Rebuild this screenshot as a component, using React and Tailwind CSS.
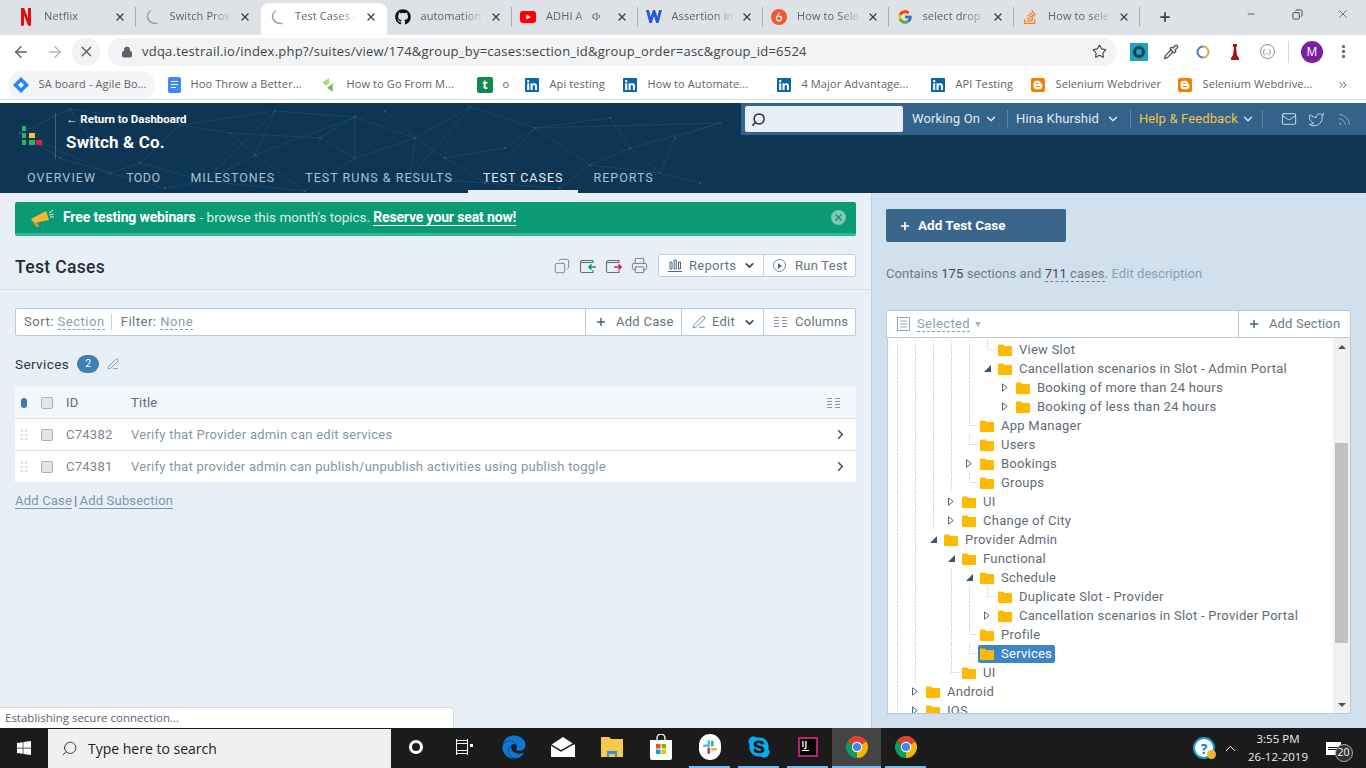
import React from 'react'
import {
  ArrowLeft, ArrowRight, X, Lock, Star, MoreVertical, Plus, Minus, Search, ChevronDown, ChevronRight,
  Mail, Twitter, Rss, Copy, Printer, PenLine, Volume1, ChevronUp, ChevronsRight, Pipette,
} from 'lucide-react'
import { FaGithub, FaWindows, FaEdge, FaSkype, FaStackOverflow, FaLinkedin, FaBlogger } from 'react-icons/fa'
import { FcGoogle } from 'react-icons/fc'

const CHROME_FONT = { fontFamily: '"Open Sans", "Liberation Sans", sans-serif' }

function Spinner() {
  return (
    <svg width="16" height="16" viewBox="0 0 16 16" fill="none" className="shrink-0">
      <path d="M13 14.500C7 15 3 11 3.500 6.500 3.800 4.500 5 3 6.500 2" stroke="#9aa0a6" strokeWidth="1.400" strokeLinecap="round" />
    </svg>
  )
}

function NetflixN() {
  return (
    <svg width="16" height="18" viewBox="0 0 16 18" className="shrink-0">
      <path d="M3 0h3.200l3.800 10V0H13v18l-3-.4L6 7.500V17.400L3 18z" fill="#e50914" />
    </svg>
  )
}

function YoutubeIcon() {
  return (
    <svg width="16" height="12" viewBox="0 0 16 12" className="shrink-0">
      <rect width="16" height="12" rx="3" fill="#f00" />
      <path d="M6.400 3.400v5.200L11 6z" fill="#fff" />
    </svg>
  )
}

function WLogo() {
  return (
    <svg width="16" height="13" viewBox="0 0 16 13" className="shrink-0">
      <path d="M0 0h3l1.600 7L7 0h2l2.400 7L13 0h3l-3.400 13h-2.400L8 6l-2.200 7H3.400z" fill="#2459d8" />
    </svg>
  )
}

function OrangeCircle() {
  return (
    <svg width="16" height="16" viewBox="0 0 16 16" className="shrink-0">
      <circle cx="8" cy="8" r="8" fill="#f1592a" />
      <path d="M8.500 3.500 5.500 8.500a2.600 2.600 0 1 0 5 0A2.500 2.500 0 0 0 7.500 7.500" fill="none" stroke="#fff" strokeWidth="1.300" />
    </svg>
  )
}

const TABS = [
  { title: 'Netflix', icon: <NetflixN />, sep: true },
  { title: 'Switch Prov', icon: <Spinner />, sep: false },
  { title: 'Test Cases -', icon: <Spinner />, active: true, sep: false },
  { title: 'automation', icon: <FaGithub size={16} className="shrink-0 text-[#111]" />, sep: true },
  { title: 'ADHI A', icon: <YoutubeIcon />, audio: true, sep: true },
  { title: 'Assertion in', icon: <WLogo />, sep: true },
  { title: 'How to Sele', icon: <OrangeCircle />, sep: true },
  { title: 'select drop', icon: <FcGoogle size={16} className="shrink-0" />, sep: true },
  { title: 'How to sele', icon: <FaStackOverflow size={16} className="shrink-0 text-[#f48024]" />, sep: true },
]

function TabStrip() {
  return (
    <div className="h-[35px] shrink-0 bg-[#dee1e6] flex items-end pl-[10px] relative" style={CHROME_FONT}>
      {TABS.map((t) => (
        <div
          key={t.title}
          className={`w-[125.500px] h-[32px] shrink-0 flex items-center pl-[8px] pb-[5px] ${t.active ? 'bg-white rounded-t-lg' : ''}`}
        >
          {t.icon}
          <span className="ml-[10px] flex-1 min-w-0 whitespace-nowrap overflow-hidden text-[11px] tracking-[0.01em] text-[#5f6368] [mask-image:linear-gradient(to_right,black_65%,transparent_98%)]">
            {t.title}
          </span>
          {t.audio && <Volume1 size={11} className="shrink-0 text-[#555] mr-[9px]" />}
          <X size={12} strokeWidth={2.600} className="shrink-0 ml-[4px] mr-px text-[#3c4043]" />
          <span className="w-[9px] h-[20px] shrink-0 flex justify-end">
            {t.sep && <span className="w-px h-full bg-[#a9adb2]" />}
          </span>
        </div>
      ))}
      <Plus size={14} strokeWidth={3} className="ml-[18px] mb-[11px] text-[#3c4043]" />
      <div className="ml-auto self-start flex items-center h-[28px] text-[#444]">
        <span className="w-[46px] flex justify-center"><Minus size={10} /></span>
        <span className="w-[46px] flex justify-center"><Copy size={11} className="-scale-x-100" /></span>
        <span className="w-[46px] flex justify-center"><X size={14} strokeWidth={1.200} /></span>
      </div>
    </div>
  )
}

function ExtIcons() {
  return (
    <div className="flex items-center ml-[6px]">
      <span className="w-[32px] flex justify-center">
        <span className="w-[18px] h-[18px] bg-[#1fa3b8] flex items-center justify-center">
          <span className="w-[12px] h-[12px] rounded-full border-[3px] border-[#0d3d55]" />
        </span>
      </span>
      <span className="w-[32px] flex justify-center"><Pipette size={16} className="text-[#555]" /></span>
      <span className="w-[32px] flex justify-center">
        <svg width="16" height="16" viewBox="0 0 16 16" fill="none">
          <path d="M8 2.500A5.500 5.500 0 0 0 8 13.500" stroke="#3f7fd1" strokeWidth="2" />
          <path d="M8 2.500A5.500 5.500 0 0 1 8 13.500" stroke="#e5a82e" strokeWidth="2" />
        </svg>
      </span>
      <span className="w-[32px] flex justify-center">
        <svg width="12" height="18" viewBox="0 0 12 18">
          <path d="M4 1h4v3H7l1 8 2 3v2H2v-2l2-3 1-8H4z" fill="#a51616" />
        </svg>
      </span>
      <span className="w-[32px] flex justify-center">
        <span className="w-[15px] h-[15px] rounded-full border border-[#888] flex items-center justify-center text-[7px] leading-none text-[#555]">(..)</span>
      </span>
      <span className="w-px h-[22px] bg-[#d5d7da] ml-[5px] mr-[12px]" />
      <span className="w-[22px] h-[22px] rounded-full bg-[#7b1fa2] text-white text-[12px] flex items-center justify-center">M</span>
      <MoreVertical size={17} strokeWidth={2.600} className="ml-[12px] text-[#5f6368]" />
    </div>
  )
}

function Toolbar() {
  return (
    <div className="h-[33px] shrink-0 bg-white flex items-center pl-[12px]" style={CHROME_FONT}>
      <ArrowLeft size={18} className="text-[#5f6368] ml-0" />
      <ArrowRight size={18} className="text-[#b5b8bc] ml-[16px]" />
      <span className="w-[28px] h-[28px] rounded-full bg-[#f1f3f4] ml-[8px] flex items-center justify-center">
        <X size={17} className="text-[#5f6368]" />
      </span>
      <div className="ml-[8px] w-[1009px] h-[28px] rounded-full bg-[#f1f3f4] flex items-center pl-[13px] pr-[10px]">
        <Lock size={12} fill="#5f6368" className="text-[#5f6368]" />
        <span className="ml-[9px] text-[13px] tracking-[0.018em] text-[#444]">vdqa.testrail.io/index.php?/suites/view/174&amp;group_by=cases:section_id&amp;group_order=asc&amp;group_id=6524</span>
        <Star size={15} strokeWidth={1.800} className="ml-auto text-[#444]" />
      </div>
      <ExtIcons />
    </div>
  )
}

const LinkedIn = <FaLinkedin size={16} className="text-[#0a66a8] shrink-0" />
const Blogger = <FaBlogger size={16} className="text-[#f57d00] shrink-0" />

const BOOKMARKS = [
  {
    label: 'SA board - Agile Bo...',
    width: 'w-[147px] mr-[8px] bg-[#f4f5f6] rounded-full',
    icon: (
      <svg width="16" height="16" viewBox="0 0 16 16" className="shrink-0">
        <path d="M8 0l8 8-8 8-8-8z" fill="#2684ff" />
        <path d="M8 5l3 3-3 3-3-3z" fill="#fff" />
      </svg>
    ),
  },
  {
    label: 'Hoo Throw a Better...',
    width: 'w-[154px]',
    icon: (
      <span className="w-[13px] h-[16px] rounded-[2px] bg-[#4285f4] shrink-0 flex flex-col justify-center gap-[2px] px-[3px]">
        <span className="h-px bg-white" /><span className="h-px bg-white" /><span className="h-px bg-white w-[5px]" />
      </span>
    ),
  },
  {
    label: 'How to Go From M...',
    width: 'w-[155px]',
    icon: (
      <svg width="15" height="16" viewBox="0 0 17 16" className="shrink-0">
        <path d="M1 5l7-5v6L4 9z" fill="#a3d977" />
        <path d="M16 5l-4 3v8L6 11l4-3z" fill="#6cb74f" />
      </svg>
    ),
  },
  {
    label: 'o',
    width: 'w-[47px]',
    icon: (
      <span className="w-[16px] h-[16px] rounded-[2px] bg-[#0f8a4b] text-white text-[12px] font-bold leading-none shrink-0 flex items-center justify-center">t</span>
    ),
  },
  { label: 'Api testing', width: 'w-[98px]', icon: LinkedIn },
  { label: 'How to Automate...', width: 'w-[154px]', icon: LinkedIn },
  { label: '4 Major Advantage...', width: 'w-[154px]', icon: LinkedIn },
  { label: 'API Testing', width: 'w-[100px]', icon: LinkedIn },
  { label: 'Selenium Webdriver', width: 'w-[147px]', icon: Blogger },
  { label: 'Selenium Webdrive...', width: 'w-[150px]', icon: Blogger },
]

function Bookmarks() {
  return (
    <div className="h-[35px] shrink-0 bg-white pt-[2px] pb-[3px]" style={CHROME_FONT}>
      <div className="h-[30px] border-b border-[#dadce0] flex items-center pl-[8px]">
        {BOOKMARKS.map((b) => (
          <div key={b.label + b.width} className={`${b.width} h-[28px] shrink-0 flex items-center pl-[5px] gap-[9.500px]`}>
            {b.icon}
            <span className="text-[11px] tracking-[0.01em] text-[#5f6368] whitespace-nowrap">{b.label}</span>
          </div>
        ))}
        <ChevronsRight size={12} className="ml-[15px] text-[#5f6368]" />
      </div>
    </div>
  )
}

const NET_PTS = [
  [20, 30], [70, 6], [140, 60], [205, 78], [275, 8], [355, 14], [415, 35], [470, 4], [535, 25], [590, 62], [630, 45],
  [110, 70], [255, 52], [305, 88], [355, 55], [485, 80], [560, 85], [660, 70], [720, 20], [410, 75], [180, 22],
  [60, 55], [230, 30], [320, 35], [385, 8], [445, 55], [505, 45], [610, 15], [675, 35], [700, 80], [90, 35], [165, 85],
]
const NET_LINKS = [
  [0, 1], [1, 20], [20, 2], [2, 3], [3, 4], [4, 5], [5, 6], [6, 7], [7, 8], [8, 9], [9, 10], [11, 2], [3, 12], [12, 13],
  [13, 14], [14, 6], [14, 5], [4, 12], [6, 19], [19, 15], [15, 16], [16, 9], [9, 17], [10, 18], [8, 15], [7, 19], [5, 12],
  [20, 4], [11, 0], [13, 3], [10, 17], [8, 18], [21, 0], [21, 11], [22, 20], [22, 12], [23, 5], [23, 14], [24, 6], [25, 6],
  [25, 15], [26, 8], [26, 25], [27, 8], [27, 10], [28, 18], [28, 17], [29, 17], [30, 1], [30, 21], [31, 11], [31, 3], [22, 23],
]

function NetworkBackdrop() {
  return (
    <svg className="absolute left-0 top-0 pointer-events-none" width="740" height="90" viewBox="0 0 740 90">
      {NET_LINKS.map(([a, b]) => (
        <line key={`${a}-${b}`} x1={NET_PTS[a][0]} y1={NET_PTS[a][1]} x2={NET_PTS[b][0]} y2={NET_PTS[b][1]} stroke="#1f4a6c" strokeWidth="0.700" />
      ))}
      {NET_PTS.map(([x, y]) => <circle key={`${x}-${y}`} cx={x} cy={y} r="1.200" fill="#265475" />)}
    </svg>
  )
}

const NAV = [
  { label: 'OVERVIEW', track: 'tracking-[0.085em]' },
  { label: 'TODO', track: 'tracking-[0.03em]' },
  { label: 'MILESTONES', track: 'tracking-[0.08em]' },
  { label: 'TEST RUNS & RESULTS', track: 'tracking-[0.08em]' },
  { label: 'TEST CASES', track: 'tracking-[0.08em]' },
  { label: 'REPORTS', track: 'tracking-[0.08em]' },
]

function AppHeader() {
  return (
    <header className="h-[90px] shrink-0 bg-[#0f3554] relative flex flex-col font-['Roboto',sans-serif]">
      <NetworkBackdrop />
      <div className="h-[60px] flex items-start justify-between relative">
        <div className="flex items-start pt-[10px] pl-[22px]">
          <div className="w-[20px] h-[19px] mt-[13px] grid grid-cols-3 grid-rows-3 gap-[1.500px] shrink-0">
            <span className="bg-[#28b463] w-[4px]" /><span /><span />
            <span className="bg-[#28b463] w-[4px]" /><span className="bg-[#f4c430]" /><span />
            <span className="bg-[#28b463] w-[4px]" /><span className="bg-[#28b463]" /><span className="bg-[#e6194b]" />
          </div>
          <span className="w-px h-[46px] bg-[#3c6484] ml-[13px]" />
          <div className="ml-[10px] text-white">
            <div className="text-[11.500px] font-bold leading-[11px] mt-[1px]">← Return to Dashboard</div>
            <div className="text-[17px] font-bold leading-[20px] mt-[7px] tracking-[0.01em]">Switch &amp; Co.</div>
          </div>
        </div>
        <div className="w-[625px] h-[32px] bg-[#33628a] flex items-center pl-[4px] text-[13px] tracking-[0.01em] text-[#e3ecf3]">
          <div className="w-[158px] h-[26px] shrink-0 rounded-[2px] bg-[#e8eff7] flex items-center pl-[6px]">
            <Search size={15} strokeWidth={2.400} className="text-[#15324a] -scale-x-100" />
          </div>
          <span className="ml-[9px] whitespace-nowrap">Working On</span>
          <ChevronDown size={14} strokeWidth={2.400} className="ml-[4px] shrink-0" />
          <span className="w-px h-[18px] bg-[#5d86a8] ml-[9px] shrink-0" />
          <span className="ml-[8px] whitespace-nowrap">Hina Khurshid</span>
          <ChevronDown size={14} strokeWidth={2.400} className="ml-[7px] shrink-0" />
          <span className="w-px h-[18px] bg-[#5d86a8] ml-[10px] shrink-0" />
          <span className="ml-[8px] whitespace-nowrap text-[#f5c542]">Help &amp; Feedback</span>
          <ChevronDown size={14} strokeWidth={2.400} className="ml-[3px] shrink-0" />
          <span className="w-px h-[18px] bg-[#5d86a8] ml-[7px] shrink-0" />
          <Mail size={16} strokeWidth={1.300} className="ml-[18px] shrink-0" />
          <Twitter size={17} strokeWidth={1.200} className="ml-[11px] shrink-0" />
          <Rss size={15} strokeWidth={1.200} className="ml-[12px] shrink-0 text-[#9fb8cc]" />
        </div>
      </div>
      <nav className="h-[30px] flex pl-[12px] relative">
        {NAV.map((n) => (
          <span
            key={n.label}
            className={`px-[15px] pt-[3px] h-full flex items-center text-[12.500px] ${n.track} whitespace-nowrap border-b-[3px] ${n.label === 'TEST CASES' ? 'border-[#e8eff7] text-[#e8eff7]' : 'border-transparent text-[#a9c0d3]'}`}
          >
            {n.label}
          </span>
        ))}
      </nav>
    </header>
  )
}

function ColumnsIcon({ className }) {
  return (
    <svg width="13" height="12" viewBox="0 0 13 12" fill="none" stroke="currentColor" className={className}>
      <path d="M0 1.500h5M8 1.500h5M0 4.500h5M8 4.500h5M0 7.500h5M8 7.500h5M0 10.500h5M8 10.500h5" />
    </svg>
  )
}

function TrayIcon({ arrow }) {
  return (
    <svg width="18" height="16" viewBox="0 0 18 16" fill="none">
      <path d="M14 5V2.500H3A2 2 0 0 0 1.500 4.500V13a1.500 1.500 0 0 0 1.500 1.500h11V12" stroke="#5d6f80" strokeWidth="1.100" />
      <path d="M1.500 4.500H14" stroke="#5d6f80" strokeWidth="1.100" />
      {arrow === 'in' ? (
        <path d="M17 9H10M12.500 6.500 10 9l2.500 2.500" stroke="#0a9a74" strokeWidth="1.700" />
      ) : (
        <path d="M9 9h7M13.500 6.500 16 9l-2.500 2.500" stroke="#e6194b" strokeWidth="1.700" />
      )}
    </svg>
  )
}

function Banner() {
  return (
    <div className="h-[34px] shrink-0 rounded-[2px] bg-[#0a9a74] border-b-[3px] border-[#2fb595] flex items-center pl-[14px] pr-[10px] text-white">
      <svg width="26" height="22" viewBox="0 0 26 22" className="shrink-0">
        <path d="M2 12 17 4l3 9-15 3z" fill="#f5b83a" />
        <path d="M5 16l2 4h3l-2-5z" fill="#d99a24" />
        <path d="M20 6l4-3M21 10h4M20.500 8l4-1" stroke="#e8f5ef" strokeWidth="1" fill="none" />
      </svg>
      <span className="ml-[8px] text-[14px] font-bold tracking-[-0.01em] whitespace-nowrap">Free testing webinars</span>
      <span className="ml-[4px] text-[13.500px] whitespace-nowrap text-[#dff3ec]">- browse this month's topics.</span>
      <span className="ml-[3px] text-[14px] font-bold tracking-[-0.01em] whitespace-nowrap border-b border-white leading-[16px]">Reserve your seat now!</span>
      <span className="ml-auto w-[15px] h-[15px] rounded-full bg-[#7fc9b4] flex items-center justify-center">
        <X size={11} strokeWidth={3} className="text-[#0a9a74]" />
      </span>
    </div>
  )
}

function TitleRow() {
  return (
    <div className="mt-[18px] -mx-[15px] px-[15px] pb-[12px] border-b border-[#d3dfe9] flex items-center">
      <h1 className="h-[23px] text-[17.500px] leading-[27px] font-medium tracking-[0.02em] text-[#1f2d3a]">Test Cases</h1>
      <div className="ml-auto flex items-center text-[#5d6f80]">
        <Copy size={16} strokeWidth={1.200} className="-scale-x-100 mr-[9px]" />
        <span className="mr-[8px] flex"><TrayIcon arrow="in" /></span>
        <span className="mr-[8px] flex"><TrayIcon arrow="out" /></span>
        <Printer size={17} strokeWidth={1.200} className="mr-[10px]" />
        <div className="w-[198px] flex h-[23px] rounded-[2px] border border-[#c0d0de] bg-white text-[13px] tracking-[0.02em] text-[#66747f]">
          <div className="w-[105px] shrink-0 flex items-center pl-[9px] border-r border-[#c0d0de]">
            <svg width="14" height="13" viewBox="0 0 14 13" fill="none" stroke="#4f6880" className="shrink-0">
              <path d="M0 12.500h14M2 3h2v7H2zM6.200 1h2v9h-2zM10.500 3h2v7h-2z" />
            </svg>
            <span className="ml-[7px]">Reports</span>
            <ChevronDown size={13} strokeWidth={3} className="ml-[7px] text-[#39495a]" />
          </div>
          <div className="flex-1 flex items-center pl-[9px]">
            <span className="w-[13px] h-[13px] rounded-full border border-[#708597] flex items-center justify-center">
              <span className="w-0 h-0 border-y-[3px] border-y-transparent border-l-[4px] border-l-[#4f6880] ml-px" />
            </span>
            <span className="ml-[9px] whitespace-nowrap">Run Test</span>
          </div>
        </div>
      </div>
    </div>
  )
}

function FilterBar() {
  return (
    <div className="mt-[18px] h-[28px] flex rounded-[2px] border border-[#b9cbda] bg-white text-[13px] tracking-[0.02em] text-[#66747f]">
      <div className="w-[570px] shrink-0 flex items-center pl-[8px] border-r border-[#b9cbda] tracking-[0.04em]">
        Sort:&nbsp;<span className="text-[#8ba0b3] border-b border-dashed border-[#8ba0b3] leading-[14px]">Section</span>
        <span className="w-px h-[16px] bg-[#c9d5df] ml-[6px] mr-[9px]" />
        Filter:&nbsp;<span className="text-[#8ba0b3] border-b border-dashed border-[#8ba0b3] leading-[14px]">None</span>
      </div>
      <div className="w-[96px] shrink-0 flex items-center pl-[9px] border-r border-[#b9cbda]">
        <Plus size={12} strokeWidth={2.800} className="text-[#3e5c78]" />
        <span className="ml-[9px] whitespace-nowrap">Add Case</span>
      </div>
      <div className="w-[82px] shrink-0 flex items-center pl-[10px] border-r border-[#b9cbda]">
        <PenLine size={14} strokeWidth={1.200} className="text-[#3e5c78]" />
        <span className="ml-[6px]">Edit</span>
        <ChevronDown size={13} strokeWidth={3} className="ml-[8px] text-[#39495a]" />
      </div>
      <div className="flex-1 flex items-center pl-[10px]">
        <ColumnsIcon className="text-[#8896a3]" />
        <span className="ml-[8px]">Columns</span>
      </div>
    </div>
  )
}

const CASES = [
  ['C74382', 'Verify that Provider admin can edit services'],
  ['C74381', 'Verify that provider admin can publish/unpublish activities using publish toggle'],
]

function Checkbox() {
  return <span className="w-[12px] h-[12px] rounded-[2px] border border-[#a9b2ba] bg-[#e3e6e9] shrink-0" />
}

function CasesTable() {
  return (
    <div className="mt-[13px] text-[13px] tracking-[0.02em]">
      <div className="h-[31px] bg-[#f3f7fb] flex items-center text-[#5f6c78]">
        <span className="ml-[6px] w-[6px] h-[10px] rounded-[3px] bg-[#3f7bab] shrink-0" />
        <span className="ml-[14px] flex"><Checkbox /></span>
        <span className="ml-[13px] w-[65px]">ID</span>
        <span>Title</span>
        <ColumnsIcon className="ml-auto mr-[16px] text-[#8896a3]" />
      </div>
      {CASES.map(([id, title]) => (
        <div key={id} className="h-[32px] bg-white border-t border-[#d3dfe9] flex items-center">
          <span className="ml-[6px] w-[6px] h-[10px] shrink-0 grid grid-cols-2 gap-[2px]">
            <span className="bg-[#d5dbe0]" /><span className="bg-[#d5dbe0]" />
            <span className="bg-[#d5dbe0]" /><span className="bg-[#d5dbe0]" />
            <span className="bg-[#d5dbe0]" /><span className="bg-[#d5dbe0]" />
          </span>
          <span className="ml-[14px] flex"><Checkbox /></span>
          <span className="ml-[13px] w-[65px] text-[#7a8691]">{id}</span>
          <span className="text-[#8396a8]">{title}</span>
          <ChevronRight size={15} strokeWidth={2.600} className="ml-auto mr-[8px] text-[#39556e]" />
        </div>
      ))}
    </div>
  )
}

function LeftPanel() {
  return (
    <section className="w-[872px] shrink-0 bg-[#e8eff7] px-[15px] pt-[9px] flex flex-col border-r border-[#bcd0e0]">
      <Banner />
      <TitleRow />
      <FilterBar />
      <div className="mt-[18px] h-[20px] flex items-center">
        <span className="text-[13.500px] tracking-[0.03em] text-[#2b3844]">Services</span>
        <span className="ml-[8px] w-[22px] h-[18px] rounded-full bg-[#3f80b0] text-white text-[10.500px] flex items-center justify-center">2</span>
        <PenLine size={12} strokeWidth={1.300} className="ml-[8px] text-[#3f80b0]" />
      </div>
      <CasesTable />
      <div className="mt-[11px] h-[16px] flex items-center text-[13px] tracking-[0.015em] text-[#7a97b2]">
        <span className="border-b border-[#7a97b2] leading-[14px]">Add Case</span>
        <span className="mx-[2px] text-[#5f6c78]">|</span>
        <span className="border-b border-[#7a97b2] leading-[14px]">Add Subsection</span>
      </div>
    </section>
  )
}

const TREE = [
  { label: 'View Slot', level: 4, guides: [0, 1, 2, 3, 4], node: 'line' },
  { label: 'Cancellation scenarios in Slot - Admin Portal', level: 4, guides: [0, 1, 2, 3, 4], node: 'open' },
  { label: 'Booking of more than 24 hours', level: 5, guides: [0, 1, 2, 3, 4], node: 'closed' },
  { label: 'Booking of less than 24 hours', level: 5, guides: [0, 1, 2, 3, 4], node: 'closed' },
  { label: 'App Manager', level: 3, guides: [0, 1, 2, 3], node: 'line' },
  { label: 'Users', level: 3, guides: [0, 1, 2, 3], node: 'line' },
  { label: 'Bookings', level: 3, guides: [0, 1, 2, 3], node: 'closed' },
  { label: 'Groups', level: 3, guides: [0, 1, 2, 3], node: 'line' },
  { label: 'UI', level: 2, guides: [0, 1, 2], node: 'closed' },
  { label: 'Change of City', level: 2, guides: [0, 1, 2], node: 'closed' },
  { label: 'Provider Admin', level: 1, guides: [0, 1], node: 'open' },
  { label: 'Functional', level: 2, guides: [0, 1], node: 'open' },
  { label: 'Schedule', level: 3, guides: [0, 1, 3], node: 'open' },
  { label: 'Duplicate Slot - Provider', level: 4, guides: [0, 1, 3, 4], node: 'line' },
  { label: 'Cancellation scenarios in Slot - Provider Portal', level: 4, guides: [0, 1, 3, 4], node: 'closed' },
  { label: 'Profile', level: 3, guides: [0, 1, 3], node: 'line' },
  { label: 'Services', level: 3, guides: [0, 1, 3], node: 'line', selected: true },
  { label: 'UI', level: 2, guides: [0, 1], node: 'line' },
  { label: 'Android', level: 0, guides: [0], node: 'closed' },
  { label: 'IOS', level: 0, guides: [0], node: 'closed' },
]

function Folder() {
  return (
    <svg width="14" height="12" viewBox="0 0 14 12" className="shrink-0">
      <path d="M0 1.500A1 1 0 0 1 1 .5h4l1.500 1.500H13a1 1 0 0 1 1 1V11a1 1 0 0 1-1 1H1a1 1 0 0 1-1-1z" fill="#ffb900" />
    </svg>
  )
}

function Guide({ on }) {
  return <span className={`ml-[9px] w-[9px] self-stretch shrink-0 ${on ? 'border-l border-dotted border-[#c3ced8]' : ''}`} />
}

function Node({ node }) {
  if (node === 'line') {
    return (
      <span className="ml-[9px] w-[9px] self-stretch shrink-0 flex flex-col">
        <span className="h-1/2 border-l border-b border-dotted border-[#c3ced8]" />
      </span>
    )
  }
  return (
    <span className="w-[18px] shrink-0 flex justify-center">
      {node === 'open' ? (
        <svg width="7" height="7" viewBox="0 0 7 7"><path d="M7 0v7H0z" fill="#3a556e" /></svg>
      ) : (
        <svg width="6" height="9" viewBox="0 0 6 9"><path d="M.5.8 5.200 4.500.5 8.200z" fill="#fff" stroke="#4f6880" /></svg>
      )}
    </span>
  )
}

function TreeRow({ row }) {
  const cells = Array.from({ length: row.level + 1 }, (_, i) => i)
  return (
    <div className="h-[19px] flex items-center shrink-0">
      {cells.map((i) => <Guide key={i} on={row.guides.includes(i)} />)}
      <Node node={row.node} />
      <span className={`flex items-center gap-[7px] h-[18px] pl-[2px] pr-[3px] rounded-[2px] ${row.selected ? 'bg-[#3d85c6] text-white' : 'text-[#5f6c78]'}`}>
        <Folder />
        <span className="whitespace-nowrap">{row.label}</span>
      </span>
    </div>
  )
}

function RightPanel() {
  return (
    <section className="flex-1 min-w-0 bg-[#d0e0ec] pl-[14px] pr-[15px] pt-[16px] flex flex-col">
      <div className="w-[180px] h-[33px] rounded-[2px] bg-[#3a668c] flex items-center pl-[13px] text-white">
        <Plus size={12} strokeWidth={3.400} />
        <span className="ml-[7px] text-[13.500px] font-bold">Add Test Case</span>
      </div>
      <div className="mt-[23px] h-[18px] text-[13px] leading-[18px] tracking-[0.005em] text-[#6d7c89] whitespace-nowrap">
        Contains <span className="text-[#3f4c58]">175</span> sections and{' '}
        <span className="border-b border-dashed border-[#6d7c89]"><span className="text-[#3f4c58]">711</span> cases</span>.{' '}
        <span className="text-[#86a0b5]">Edit description</span>
      </div>
      <div className="mt-[27px] h-[28px] flex rounded-t-[2px] border border-[#b9cbda] bg-white text-[13px] text-[#6d7c89]">
        <div className="w-[352px] shrink-0 flex items-center pl-[10px] border-r border-[#b9cbda]">
          <svg width="13" height="14" viewBox="0 0 13 14" fill="none" stroke="#98a6b2">
            <path d="M.5.5h12v13H.5zM3 4h7M3 7h7M3 10h7" />
          </svg>
          <span className="ml-[7px] tracking-[0.03em] text-[#8ba0b3] border-b border-dashed border-[#8ba0b3] leading-[15px]">Selected</span>
          <span className="ml-[5px] w-0 h-0 border-x-[3.500px] border-x-transparent border-t-[5px] border-t-[#a6b4c0]" />
        </div>
        <div className="flex-1 flex items-center pl-[9px]">
          <Plus size={12} strokeWidth={2.800} className="text-[#3e5c78] shrink-0" />
          <span className="ml-[9px] whitespace-nowrap tracking-[0.01em]">Add Section</span>
        </div>
      </div>
      <div className="ml-px h-[376px] flex border-x border-b border-[#b9cbda] bg-white overflow-hidden text-[13px] tracking-[0.02em]">
        <div className="flex-1 min-w-0 pt-[2px] flex flex-col overflow-hidden">
          {TREE.map((row, i) => <TreeRow key={i} row={row} />)}
        </div>
        <div className="w-[17px] shrink-0 bg-[#f1f1f1] flex flex-col items-center">
          <span className="h-[17px] shrink-0 flex items-center">
            <span className="w-0 h-0 border-x-[4px] border-x-transparent border-b-[4px] border-b-[#505050]" />
          </span>
          <span className="mt-[88px] w-[13px] h-[200px] bg-[#c1c1c1] shrink-0" />
          <span className="mt-auto h-[17px] shrink-0 flex items-center">
            <span className="w-0 h-0 border-x-[4px] border-x-transparent border-t-[4px] border-t-[#505050]" />
          </span>
        </div>
      </div>
    </section>
  )
}

function ChromeIcon() {
  return (
    <svg width="24" height="24" viewBox="0 0 24 24">
      <path d="M12 12 2.470 6.500A11 11 0 0 1 21.530 6.500z" fill="#db4437" />
      <path d="M12 12 2.470 6.500A11 11 0 0 0 12 23z" fill="#0f9d58" />
      <path d="M12 12V23A11 11 0 0 0 21.530 6.500z" fill="#f4b400" />
      <circle cx="12" cy="12" r="5.200" fill="#fff" />
      <circle cx="12" cy="12" r="4.100" fill="#4285f4" />
    </svg>
  )
}

function SlackIcon() {
  return (
    <span className="w-[22px] h-[26px] rounded-full bg-white flex items-center justify-center">
      <svg width="16" height="16" viewBox="0 0 16 16">
        <rect x="5.500" y="1" width="2.500" height="6.500" rx="1.250" fill="#36c5f0" />
        <rect x="1" y="5.500" width="6.500" height="2.500" rx="1.250" fill="#36c5f0" />
        <rect x="5.500" y="8.500" width="2.500" height="6.500" rx="1.250" fill="#e01e5a" />
        <rect x="9" y="9" width="6" height="2.500" rx="1.250" fill="#ecb22e" />
        <rect x="9" y="1.500" width="2.500" height="6" rx="1.250" fill="#2eb67d" />
      </svg>
    </span>
  )
}

const TASK_APPS = [
  { id: 'cortana', node: <span className="w-[14px] h-[14px] rounded-full border-[3px] border-white" /> },
  {
    id: 'view',
    node: (
      <svg width="17" height="18" viewBox="0 0 17 18" fill="none" stroke="#fff">
        <path d="M.5 2.500h11M.5 15.500h11M.5 1v16M11.500 1v16M.5 5.500h11v7H.5z" strokeWidth="1" />
        <rect x="14" y="6" width="3" height="3" fill="#fff" stroke="none" />
      </svg>
    ),
  },
  { id: 'edge', node: <FaEdge size={24} className="text-[#0a78d4]" /> },
  {
    id: 'mail',
    node: (
      <svg width="24" height="20" viewBox="0 0 24 20">
        <path d="M0 8 12 0l12 8v12H0z" fill="#fff" />
        <path d="M0 8l10 6 14-8" fill="none" stroke="#1b1b1b" strokeWidth="1.500" />
      </svg>
    ),
  },
  {
    id: 'files',
    node: (
      <svg width="22" height="22" viewBox="0 0 22 22">
        <path d="M0 1h8l2 2h12v18H0z" fill="#f6c94e" />
        <path d="M6 15h10v6h-2v-3H8v3H6z" fill="#3a8fd6" />
      </svg>
    ),
  },
  {
    id: 'store',
    node: (
      <svg width="22" height="26" viewBox="0 0 22 26">
        <path d="M7 6V4a4 4 0 0 1 8 0v2" fill="none" stroke="#fff" strokeWidth="1.300" />
        <path d="M0 6h22v18a2 2 0 0 1-2 2H2a2 2 0 0 1-2-2z" fill="#fff" />
        <rect x="6" y="10" width="4.500" height="4.500" fill="#f25022" />
        <rect x="11.500" y="10" width="4.500" height="4.500" fill="#7fba00" />
        <rect x="6" y="15.500" width="4.500" height="4.500" fill="#00a4ef" />
        <rect x="11.500" y="15.500" width="4.500" height="4.500" fill="#ffb900" />
      </svg>
    ),
  },
  { id: 'slack', node: <SlackIcon />, bar: true },
  { id: 'skype', node: <FaSkype size={24} className="text-[#00aff0]" />, bar: true },
  {
    id: 'idea',
    node: (
      <span className="w-[20px] h-[20px] bg-black border-2 border-[#b5246b] flex flex-col pl-[2px] text-white text-[8px] font-bold tracking-[0.05em] leading-[9px]">
        IJ<span className="w-[7px] h-px bg-white mt-[2px]" />
      </span>
    ),
    bar: true,
  },
  { id: 'chrome1', node: <ChromeIcon />, bar: true, active: true },
  { id: 'chrome2', node: <ChromeIcon />, bar: true },
]

function Taskbar() {
  return (
    <footer className="h-[40px] shrink-0 bg-[#1b1b1b] flex items-stretch" style={{ fontFamily: '"Open Sans", sans-serif' }}>
      <div className="w-[48px] flex items-center justify-center">
        <FaWindows size={16} className="text-white" />
      </div>
      <div className="w-[343px] bg-[#f0f0f0] mt-px flex items-center pl-[13px]">
        <Search size={17} strokeWidth={1.200} className="text-[#222] -scale-x-100" />
        <span className="ml-[10px] text-[14px] text-[#222]">Type here to search</span>
      </div>
      {TASK_APPS.map((a) => (
        <div key={a.id} className={`w-[49px] flex flex-col ${a.active ? 'bg-[#444]' : ''}`}>
          <div className="flex-1 min-h-0 flex items-center justify-center">{a.node}</div>
          <span className={`h-[2px] shrink-0 ${a.bar ? 'bg-[#76b9ed]' : ''} ${a.active ? 'mx-0' : 'mx-[4px]'}`} />
        </div>
      ))}
      <div className="ml-auto flex items-center text-white">
        <span className="relative w-[22px] h-[22px] rounded-full bg-white border-2 border-[#1a9cd6] text-[#1a7fc1] text-[14px] font-bold flex items-center justify-center">
          ?
          <span className="absolute -right-[3px] -bottom-[2px] w-[9px] h-[9px] rounded-full bg-[#f0b429]" />
        </span>
        <ChevronUp size={17} strokeWidth={1.400} className="ml-[7px]" />
        <div className="w-[78px] text-center text-[11.500px] leading-[18px] text-[#eee]">
          <div>3:55 PM</div>
          <div>26-12-2019</div>
        </div>
        <div className="w-[38px] ml-[3px] mr-[8px] flex justify-center items-center">
          <span className="w-[15px] h-[13px] bg-white flex flex-col justify-center gap-px px-[2px]">
            <span className="h-px bg-[#1b1b1b]" /><span className="h-px bg-[#1b1b1b]" />
          </span>
          <span className="w-[18px] h-[18px] rounded-full bg-[#333] border border-[#aaa] text-[10.500px] flex items-center justify-center -ml-[6px] mt-[10px]">20</span>
        </div>
      </div>
    </footer>
  )
}

export default function App() {
  return (
    <div className="h-screen w-full overflow-hidden flex flex-col relative font-['Roboto',sans-serif]">
      <TabStrip />
      <Toolbar />
      <Bookmarks />
      <AppHeader />
      <main className="flex-1 min-h-0 flex">
        <LeftPanel />
        <RightPanel />
      </main>
      <Taskbar />
      {/* status bubble sits on top of the page */}
      <div className="absolute left-0 bottom-[40px] w-[454px] h-[21px] bg-white border-t border-r border-[#d5d7da] rounded-tr-[4px] flex items-center pl-[5px] text-[11.500px] text-[#5f6368]" style={CHROME_FONT}>
        Establishing secure connection...
      </div>
    </div>
  )
}
